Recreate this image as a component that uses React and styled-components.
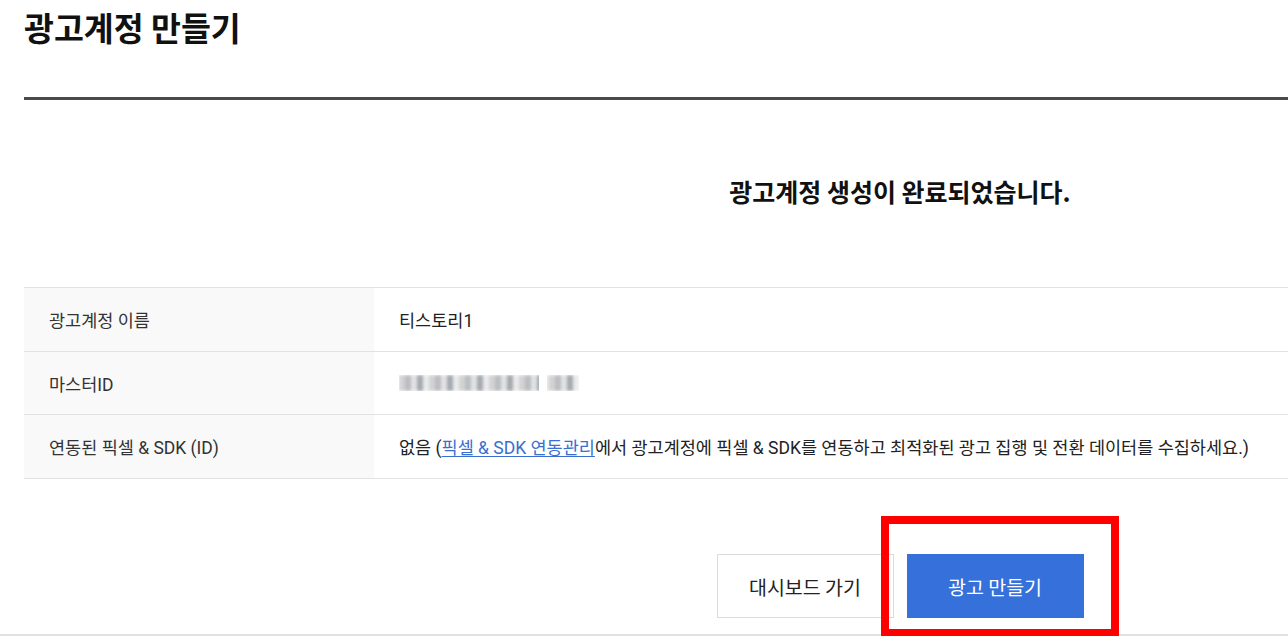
import React from "react"
import styled, { createGlobalStyle } from "styled-components"

const GlobalStyle = createGlobalStyle`
  html, body {
    margin: 0;
    padding: 0;
    background: #fff;
    overflow: hidden;
  }
  body {
    font-family: Roboto, "Noto Sans CJK KR", "Noto Sans", sans-serif;
    color: #222;
  }
`

const Page = styled.div`
  width: 1800px;
  border-bottom: 2px solid #e2e2e2;
`

const Content = styled.div`
  width: 1752px;
  margin-left: 24px;
`

const Header = styled.header`
  height: 97px;
  border-bottom: 3px solid #4a4a4a;
  box-sizing: content-box;
`

const Title = styled.h1`
  margin: 0;
  padding-top: 4px;
  font-size: 32.5px;
  line-height: 46px;
  font-weight: 700;
  color: #111;
  font-family: "Noto Sans CJK KR", sans-serif;
`

const Message = styled.div`
  height: 187px;
  box-sizing: border-box;
  padding-bottom: 6px;
  display: flex;
  align-items: center;
  justify-content: center;
  font-family: "Noto Sans CJK KR", sans-serif;
  font-size: 25px;
  font-weight: 700;
  color: #111;
`

const Table = styled.div`
  border-top: 1px solid #e2e2e2;
`

const Row = styled.div`
  display: grid;
  grid-template-columns: 350px 1fr;
  height: ${p => p.$height || 63}px;
  border-bottom: 1px solid #e2e2e2;
  font-size: 17.5px;
`

const Label = styled.div`
  background: #f9f9f9;
  display: flex;
  align-items: center;
  padding-left: 25px;
  color: #333;
`

const Value = styled.div`
  display: flex;
  align-items: center;
  padding-left: 25px;
  color: #222;
  white-space: nowrap;
`

const Link = styled.a`
  color: #3a6fd0;
  text-decoration: underline;
  text-underline-offset: 2px;
`

const Blurred = styled.span`
  display: inline-block;
  width: 180px;
  height: 16px;
  filter: blur(1.5px);
  background: repeating-linear-gradient(
    90deg,
    #c8c8c8 0 6px,
    #a9adb3 6px 12px,
    #dcdcdc 12px 18px,
    #8f949c 18px 24px,
    #e6e6e6 24px 30px
  );
  opacity: 0.8;
  -webkit-mask: linear-gradient(90deg, #000 0 140px, transparent 140px 148px, #000 148px);
`

const Actions = styled.div`
  display: flex;
  justify-content: center;
  gap: 13px;
  padding: 75px 0 16px;
`

const Button = styled.button`
  width: 177px;
  height: 64px;
  box-sizing: border-box;
  font-family: "Noto Sans CJK KR", sans-serif;
  font-size: 19.5px;
  cursor: pointer;
  border: 1px solid ${p => (p.$primary ? "#3570db" : "#dcdcdc")};
  background: ${p => (p.$primary ? "#3570db" : "#fff")};
  color: ${p => (p.$primary ? "#fff" : "#222")};
`

const Highlight = styled.div`
  position: relative;
  &::after {
    content: "";
    position: absolute;
    top: -38px;
    left: -26px;
    right: -35px;
    bottom: -19px;
    border: 8px solid #f00;
    pointer-events: none;
  }
`

export default function App() {
  return (
    <>
      <GlobalStyle />
      <Page>
        <Content>
          <Header>
            <Title>광고계정 만들기</Title>
          </Header>
          <Message>광고계정 생성이 완료되었습니다.</Message>
          <Table>
            <Row>
              <Label>광고계정 이름</Label>
              <Value>티스토리1</Value>
            </Row>
            <Row $height={62}>
              <Label>마스터ID</Label>
              <Value>
                <Blurred />
              </Value>
            </Row>
            <Row>
              <Label>연동된 픽셀 &amp; SDK (ID)</Label>
              <Value>
                없음 (<Link href="#">픽셀 &amp; SDK 연동관리</Link>에서 광고계정에 픽셀 &amp; SDK를 연동하고 최적화된 광고 집행 및 전환 데이터를 수집하세요.)
              </Value>
            </Row>
          </Table>
          <Actions>
            <Button>대시보드 가기</Button>
            <Highlight>
              <Button $primary>광고 만들기</Button>
            </Highlight>
          </Actions>
        </Content>
      </Page>
    </>
  )
}
